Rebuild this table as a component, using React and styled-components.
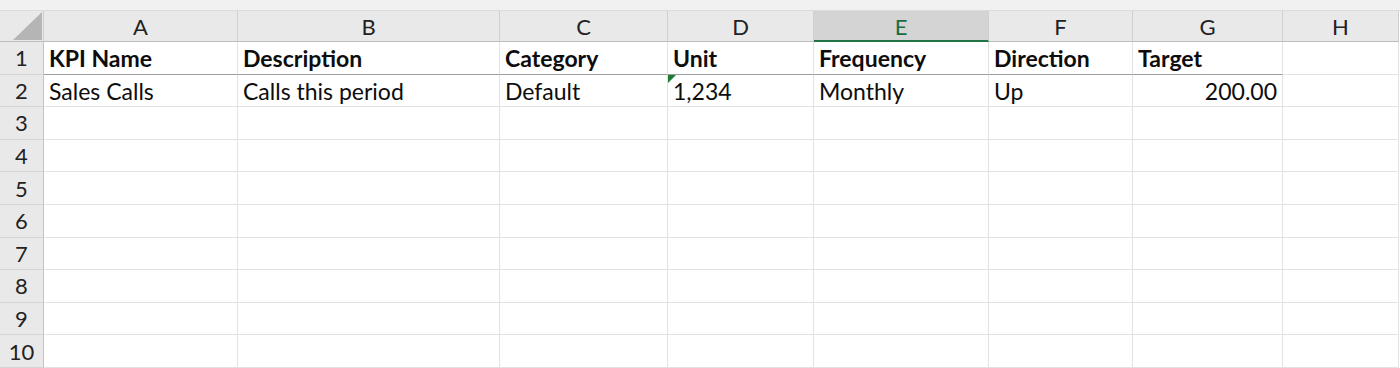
import React from 'react';
import styled, { createGlobalStyle } from 'styled-components';

const columns = [
  { key: 'A', width: 194 },
  { key: 'B', width: 262 },
  { key: 'C', width: 168 },
  { key: 'D', width: 146 },
  { key: 'E', width: 175, active: true },
  { key: 'F', width: 144 },
  { key: 'G', width: 150 },
  { key: 'H', width: 116 },
];

const rows = [
  ['KPI Name', 'Description', 'Category', 'Unit', 'Frequency', 'Direction', 'Target', ''],
  ['Sales Calls', 'Calls this period', 'Default', '1,234', 'Monthly', 'Up', '200.00', ''],
];

const ROW_COUNT = 10;

const GlobalStyle = createGlobalStyle`
  html, body {
    margin: 0;
    padding: 0;
    background: #ffffff;
    overflow: hidden;
  }
  body {
    font-family: Lato, "Open Sans", Arial, sans-serif;
  }
`;

const Page = styled.div`
  width: 1400px;
  height: 368px;
  overflow: hidden;
  background: #ffffff;
`;

const TopStrip = styled.div`
  height: 10px;
  background: #f1f1f1;
  border-bottom: 1px solid #dcdcdc;
`;

const Sheet = styled.div`
  display: grid;
  grid-template-columns: 44px ${({ $cols }) => $cols};
  grid-template-rows: 31px;
  grid-auto-rows: 32.6px;
`;

const Corner = styled.div`
  background: #e9e9e9;
  border-right: 1px solid #cfcfcf;
  border-bottom: 1px solid #bdbdbd;
  box-sizing: border-box;
  display: flex;
  align-items: flex-end;
  justify-content: flex-end;
  padding: 0 1px 1px 0;
`;

const ColHead = styled.div`
  box-sizing: border-box;
  display: flex;
  align-items: center;
  justify-content: center;
  font-size: 22px;
  padding-top: 1px;
  background: ${({ $active }) => ($active ? '#d4d4d4' : '#e9e9e9')};
  color: ${({ $active }) => ($active ? '#1d6b3f' : '#222222')};
  border-right: 1px solid #d0d0d0;
  border-bottom: ${({ $active }) => ($active ? '2px solid #217346' : '1px solid #bdbdbd')};
`;

const RowHead = styled.div`
  box-sizing: border-box;
  display: flex;
  align-items: center;
  justify-content: center;
  font-size: 22px;
  color: #222222;
  background: #e9e9e9;
  border-right: 1px solid #c4c4c4;
  border-bottom: 1px solid #d4d4d4;
`;

const Cell = styled.div`
  position: relative;
  box-sizing: border-box;
  display: flex;
  align-items: center;
  justify-content: ${({ $right }) => ($right ? 'flex-end' : 'flex-start')};
  padding: 1px 5px 0 5px;
  font-size: 23px;
  font-weight: ${({ $bold }) => ($bold ? 700 : 400)};
  color: #0d0d0d;
  white-space: nowrap;
  overflow: hidden;
  border-right: 1px solid #e2e2e2;
  border-bottom: 1px solid ${({ $rule }) => ($rule ? '#9d9d9d' : '#e2e2e2')};
`;

const Flag = styled.span`
  position: absolute;
  top: 0;
  left: 0;
  width: 0;
  height: 0;
  border-top: 8px solid #1f7a32;
  border-right: 8px solid transparent;
`;

const isNumber = (v) => /^[\d.]+$/.test(v);

const App = () => {
  const template = columns.map((c) => `${c.width}px`).join(' ');

  return (
    <Page>
      <GlobalStyle />
      <TopStrip />
      <Sheet $cols={template}>
        <Corner>
          <svg width="29" height="28" viewBox="0 0 29 28">
            <polygon points="0,28 29,28 29,0" fill="#b5b5b5" />
          </svg>
        </Corner>
        {columns.map((c) => (
          <ColHead key={c.key} $active={c.active}>{c.key}</ColHead>
        ))}

        {Array.from({ length: ROW_COUNT }, (_, r) => (
          <React.Fragment key={r}>
            <RowHead>{r + 1}</RowHead>
            {columns.map((c, ci) => {
              const value = rows[r] ? rows[r][ci] : '';
              return (
                <Cell
                  key={c.key}
                  $bold={r === 0}
                  $rule={r === 0 && c.key !== 'H'}
                  $right={r > 0 && isNumber(value)}
                >
                  {r === 1 && c.key === 'D' && <Flag />}
                  {value}
                </Cell>
              );
            })}
          </React.Fragment>
        ))}
      </Sheet>
    </Page>
  );
};

export default App;
